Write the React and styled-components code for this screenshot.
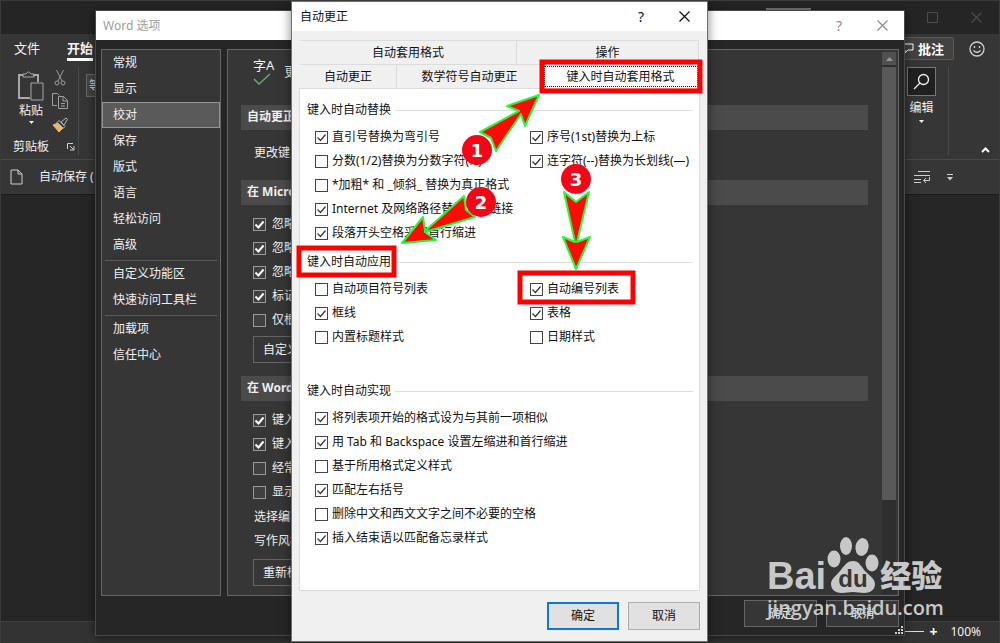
import React from "react";
import styled, { createGlobalStyle, css } from "styled-components";

const GlobalStyle = createGlobalStyle`
  * {
    box-sizing: border-box;
  }
  body {
    margin: 0;
    background: #262626;
    font-family: "Noto Sans", "Noto Sans CJK SC", sans-serif;
    font-size: 12px;
    line-height: 16px;
  }
  button,
  input,
  select {
    font: inherit;
    margin: 0;
    padding: 0;
  }
  button {
    cursor: pointer;
  }
  svg {
    display: block;
    fill: none;
    stroke: currentColor;
  }
`;

/* ---------- word window ---------- */

const WordWindow = styled.div`
  position: relative;
  display: flex;
  flex-direction: column;
  min-height: 100vh;
  overflow: hidden;
  color: #f0f0f0;
  border: 1px solid #3a3a3a;
  border-bottom: none;
`;

const WordTitle = styled.header`
  display: flex;
  justify-content: flex-end;
  height: 33px;
  padding-right: 17px;
  background: #252525;
`;

const SearchStub = styled.div`
  width: 45px;
  height: 24px;
  margin: 7px 116px 0 0;
  background: #777;
`;

const TitleButtons = styled.div`
  display: flex;
  align-items: center;
  gap: 33px;
`;

const IconButton = styled.button`
  display: flex;
  border: none;
  background: none;
  color: ${(props) => props.$color || "#d0d0d0"};
  font-size: 14px;
`;

const RibbonTabs = styled.nav`
  display: flex;
  align-items: flex-start;
  justify-content: space-between;
  height: 30px;
  padding: 3px 14px 0 13px;
  background: #363636;
`;

const TabGroup = styled.div`
  display: flex;
  align-items: center;
  gap: ${(props) => props.$gap}px;
`;

const RibbonTab = styled.button`
  height: 24px;
  border: none;
  border-bottom: 3px solid ${(props) => (props.$active ? "#fff" : "transparent")};
  background: none;
  color: #f4f4f4;
  font-size: 13px;
  font-weight: ${(props) => (props.$active ? 700 : 400)};
`;

const CommentButton = styled.button`
  display: flex;
  align-items: center;
  gap: 4px;
  height: 23px;
  padding: 0 9px;
  border: 1px solid #5c5855;
  border-radius: 2px;
  background: #444240;
  color: #fff;
  font-size: 13px;
  font-weight: 700;
`;

const Ribbon = styled.section`
  display: flex;
  justify-content: space-between;
  height: 95px;
  padding: 3px 9px 4px 12px;
  background: #363636;
`;

const RibbonLeft = styled.div`
  display: flex;
  gap: 7px;
`;

const RibbonGroup = styled.div`
  display: flex;
  flex-direction: column;
  justify-content: space-between;
  width: 66px;
  border-right: 1px solid #4a4a4a;
`;

const GroupTools = styled.div`
  display: flex;
  gap: 7px;
  padding-left: 4px;
`;

const GroupName = styled.div`
  display: flex;
  align-items: center;
  justify-content: space-between;
  padding-right: 3px;
  white-space: nowrap;
`;

const FontSelect = styled.select`
  width: 90px;
  height: 23px;
  margin-top: 7px;
  padding-left: 2px;
  border: 1px solid #666;
  border-radius: 0;
  background: #444;
  color: #ddd;
  appearance: none;
`;

const BigButton = styled.button`
  display: flex;
  flex-direction: column;
  align-items: center;
  justify-content: flex-start;
  gap: ${(props) => props.$gap || 2}px;
  padding-top: ${(props) => props.$top || 0}px;
  border: none;
  background: none;
  color: #f0f0f0;
`;

const SmallTools = styled.div`
  display: flex;
  flex-direction: column;
  align-items: center;
  gap: 7px;
  padding-top: 3px;
`;

const SearchBox = styled.span`
  display: flex;
  align-items: center;
  justify-content: center;
  width: 29px;
  height: 29px;
  border: 1px solid #777;
  background: #202020;
`;

const EditGroup = styled.div`
  display: flex;
  align-self: stretch;
  align-items: flex-start;
  width: 42px;
  margin-right: 32px;
  border-right: 1px solid #4a4a4a;
`;

const RibbonRight = styled.div`
  display: flex;
  align-items: flex-end;
`;

const QuickBar = styled.section`
  display: flex;
  align-items: center;
  justify-content: space-between;
  height: 36px;
  padding: 0 46px 0 9px;
  border-top: 1px solid #4a4a4a;
  border-bottom: 1px solid #1d1d1d;
  background: #363636;
`;

const Canvas = styled.main`
  flex: 1;
  background: #262626;
`;

const StatusBar = styled.footer`
  display: flex;
  align-items: center;
  justify-content: flex-end;
  gap: 3px;
  height: 22px;
  padding: 0 18px 2px 0;
  border-top: 1px solid #404040;
  background: #333;
`;

const ZoomTrack = styled.span`
  width: 26px;
  height: 1px;
  background: #ddd;
`;

const ZoomButton = styled.button`
  width: 12px;
  margin-right: 8px;
  border: none;
  background: none;
  color: #fff;
  font-size: 14px;
  font-weight: 700;
`;

/* ---------- options window ---------- */

const OptionsWindow = styled.section`
  position: absolute;
  top: 9px;
  right: 94px;
  bottom: 7px;
  left: 94px;
  display: flex;
  flex-direction: column;
  border: 1px solid #484848;
  background: #262626;
  box-shadow: 0 2px 10px rgba(0, 0, 0, 0.5);
`;

const OptionsTitle = styled.header`
  display: flex;
  align-items: center;
  justify-content: space-between;
  height: 29px;
  padding: 0 16px 0 7px;
  background: #fff;
  color: #9c9c9c;
  font-size: 12px;
`;

const OptionsBody = styled.div`
  display: flex;
  flex: 1;
  gap: 6px;
  min-height: 0;
  padding: 9px 5px 3px;
`;

const OptionsNav = styled.nav`
  width: 120px;
  border: 1px solid #666;
  background: #363636;
`;

const NavItem = styled.button`
  display: block;
  width: 100%;
  height: 26px;
  padding-left: 10px;
  border: 1px solid ${(props) => (props.$active ? "#949494" : "transparent")};
  background: ${(props) => (props.$active ? "#5a5a5a" : "none")};
  color: #f0f0f0;
  text-align: left;
`;

const NavLine = styled.div`
  height: 1px;
  margin: 2px 3px 0;
  background: #5a5a5a;
`;

const Panel = styled.div`
  display: flex;
  flex: 1;
  border: 1px solid #666;
  background: #363636;
`;

const PanelContent = styled.div`
  flex: 1;
  padding: 6px 0 0 13px;
  white-space: nowrap;
  overflow: hidden;
`;

const PanelHead = styled.div`
  display: flex;
  align-items: center;
  gap: 10px;
  height: 30px;
  margin: 0 0 19px 12px;
  font-size: 13px;
`;

const Band = styled.h3`
  height: 25px;
  margin: ${(props) => props.$top || 0}px 0 0;
  padding-left: 6px;
  background: #4b4b4b;
  font-size: 12px;
  font-weight: 700;
  line-height: 24px;
`;

const PanelText = styled.p`
  height: 24px;
  margin: ${(props) => props.$top || 0}px 0 0 13px;
  line-height: 24px;
`;

const PanelChecks = styled.div`
  padding: 7px 0 0 12px;
`;

const DarkButton = styled.button`
  height: 27px;
  margin-left: ${(props) => props.$left || 0}px;
  margin-top: ${(props) => props.$top || 0}px;
  padding: 0 9px;
  border: 1px solid #666;
  background: #363636;
  color: #f0f0f0;
`;

const ScrollBar = styled.div`
  display: flex;
  flex-direction: column;
  gap: 2px;
  width: 14px;
  margin: 2px 2px 1px 14px;
  background: #2e2e2e;
`;

const ScrollArrow = styled.button`
  display: flex;
  align-items: center;
  justify-content: center;
  height: 13px;
  border: none;
  background: #505050;
  color: #999;
`;

const ScrollThumb = styled.div`
  height: 433px;
  background: #595959;
`;

const OptionsFooter = styled.footer`
  position: relative;
  display: flex;
  align-items: flex-start;
  justify-content: flex-end;
  gap: 9px;
  height: 36px;
  padding: 1px 5px 0;

  button {
    width: 73px;
    margin: 0;
  }
`;

const Grip = styled.svg`
  position: absolute;
  right: 1px;
  bottom: 1px;
`;

/* ---------- auto correct dialog ---------- */

const Dialog = styled.section`
  position: absolute;
  top: 0;
  left: 50%;
  width: 417px;
  margin-left: -209px;
  display: flex;
  flex-direction: column;
  border: 1px solid #2b83cc;
  background: #f0f0f0;
  color: #111;
  box-shadow: 0 0 10px rgba(0, 0, 0, 0.5);
`;

const DialogTitle = styled.header`
  display: flex;
  align-items: center;
  justify-content: space-between;
  height: 29px;
  padding: 0 17px 0 8px;
  background: #fff;
`;

const TitleTools = styled.div`
  display: flex;
  align-items: center;
  gap: ${(props) => props.$gap}px;
`;

const TabRow = styled.div`
  display: grid;
  grid-template-columns: ${(props) => props.$columns};
  margin: ${(props) => props.$top || 0}px 8px 0;
  border-top: 1px solid #dcdcdc;
`;

const DialogTab = styled.button`
  height: 23px;
  padding: 0;
  border: none;
  border-right: 1px solid #dcdcdc;
  background: #f0f0f0;
  color: #111;

  ${(props) =>
    props.$active &&
    css`
      background: #fff;
      outline: 1px dotted #222;
      outline-offset: -2px;
    `}
`;

const Page = styled.div`
  height: 503px;
  margin: 0 7px;
  padding: 13px 6px 0 7px;
  border: 1px solid #dcdcdc;
  background: #fff;
`;

const Group = styled.fieldset`
  min-width: 0;
  margin: 0 0 ${(props) => props.$bottom || 0}px;
  padding: 0;
  border: none;
`;

const Legend = styled.legend`
  display: flex;
  align-items: center;
  gap: 4px;
  width: 100%;
  height: 16px;
  margin-bottom: 7px;
  padding: 0;

  &::after {
    content: "";
    flex: 1;
    height: 1px;
    background: #dcdcdc;
  }
`;

const Columns = styled.div`
  display: grid;
  grid-template-columns: 215px 1fr;
  align-items: start;
  padding-left: 8px;
`;

const CheckLabel = styled.label`
  display: flex;
  align-items: center;
  gap: ${(props) => (props.$dark ? 6 : 4)}px;
  height: 24px;
  white-space: nowrap;
`;

const tick = (color, width) =>
  `url("data:image/svg+xml,%3Csvg xmlns='http://www.w3.org/2000/svg' viewBox='0 0 11 11'%3E%3Cpath d='M1.5 5.5l3 3 5-6' fill='none' stroke='%23${color}' stroke-width='${width}'/%3E%3C/svg%3E")`;

const Box = styled.input`
  appearance: none;
  flex: none;
  width: 13px;
  height: 13px;
  border: 1px solid ${(props) => (props.$dark ? "#999" : "#444")};
  background: ${(props) => (props.$dark ? "#404040" : "#fff")};

  &:checked {
    background-image: ${(props) =>
      props.$dark ? tick("ffffff", 2) : tick("333333", 1.2)};
  }
`;

const DialogFooter = styled.footer`
  display: flex;
  justify-content: flex-end;
  gap: 9px;
  height: 50px;
  padding: 11px 7px 0;
`;

const DialogButton = styled.button`
  width: 72px;
  height: 28px;
  border: ${(props) => (props.$primary ? "2px solid #0b78d7" : "1px solid #adadad")};
  background: #e1e1e1;
  color: #111;
`;

const Marks = styled.svg`
  position: absolute;
  top: -1px;
  left: -1px;
  width: 417px;
  height: 640px;
  pointer-events: none;
`;

const MarkArrow = styled.polygon`
  fill: #ff0a05;
  stroke: #1dfb3c;
  stroke-width: 2;
  stroke-linejoin: round;
`;

const MarkBox = styled.rect`
  stroke: #fe0000;
  stroke-width: 5;
`;

const MarkText = styled.text`
  fill: #fff;
  stroke: none;
  font: 700 18px "DejaVu Sans", sans-serif;
  text-anchor: middle;
`;

/* ---------- watermark ---------- */

const Watermark = styled.div`
  position: absolute;
  right: 54px;
  bottom: 21px;
  width: 178px;
  color: #c8c8c8;
  pointer-events: none;
`;

const Brand = styled.div`
  display: flex;
  align-items: flex-end;
  height: 60px;
  font: 700 38px/36px "Liberation Sans", sans-serif;
`;

const BrandName = styled.span`
  font: 900 31px/40px "Noto Sans CJK SC", sans-serif;
`;

const BrandUrl = styled.div`
  font: 600 20px/28px "Open Sans", sans-serif;
`;

const CloseIcon = ({ size = 11 }) => (
  <svg width={size} height={size} viewBox="0 0 11 11">
    <path d="M.5.5l10 10M10.5.5l-10 10" strokeWidth="1.2" />
  </svg>
);

const Caret = () => (
  <svg width="5" height="3" viewBox="0 0 5 3">
    <path d="M0 0h5L2.5 3z" fill="currentColor" stroke="none" />
  </svg>
);

const Check = ({ label, checked, dark }) => (
  <CheckLabel $dark={dark}>
    <Box type="checkbox" defaultChecked={checked} $dark={dark} />
    {label}
  </CheckLabel>
);

const CheckList = ({ items, dark }) => (
  <div>
    {items.map(([label, checked]) => (
      <Check key={label} label={label} checked={checked} dark={dark} />
    ))}
  </div>
);

const navGroups = [
  ["常规", "显示", "校对", "保存", "版式", "语言", "轻松访问", "高级"],
  ["自定义功能区", "快速访问工具栏"],
  ["加载项", "信任中心"],
];

const officeChecks = [
  ["忽略全部大写的单词", true],
  ["忽略包含数字的单词", true],
  ["忽略 Internet 和文件地址", true],
  ["标记重复单词", true],
  ["仅根据主词典提供建议", false],
];

const wordChecks = [
  ["键入时检查拼写", true],
  ["键入时标记语法错误", true],
  ["经常混淆的单词", false],
  ["显示可读性统计信息", false],
];

const replaceLeft = [
  ["直引号替换为弯引号", true],
  ["分数(1/2)替换为分数字符(½)", false],
  ["*加粗* 和 _倾斜_ 替换为真正格式", false],
  ["Internet 及网络路径替换为超链接", true],
  ["段落开头空格采用首行缩进", true],
];

const replaceRight = [
  ["序号(1st)替换为上标", true],
  ["连字符(--)替换为长划线(—)", true],
];

const applyLeft = [
  ["自动项目符号列表", false],
  ["框线", true],
  ["内置标题样式", false],
];

const applyRight = [
  ["自动编号列表", true],
  ["表格", true],
  ["日期样式", false],
];

const autoChecks = [
  ["将列表项开始的格式设为与其前一项相似", true],
  ["用 Tab 和 Backspace 设置左缩进和首行缩进", true],
  ["基于所用格式定义样式", false],
  ["匹配左右括号", true],
  ["删除中文和西文文字之间不必要的空格", false],
  ["插入结束语以匹配备忘录样式", true],
];

const WordRibbon = () => (
  <>
    <WordTitle>
      <SearchStub />
      <TitleButtons>
        <IconButton $color="#4c4c4c" aria-label="最大化">
          <svg width="11" height="11" viewBox="0 0 11 11">
            <path d="M.5.5h10v10H.5z" />
          </svg>
        </IconButton>
        <IconButton $color="#4c4c4c" aria-label="关闭">
          <CloseIcon />
        </IconButton>
      </TitleButtons>
    </WordTitle>
    <RibbonTabs>
      <TabGroup $gap={27}>
        <RibbonTab>文件</RibbonTab>
        <RibbonTab $active>开始</RibbonTab>
      </TabGroup>
      <TabGroup $gap={15}>
        <CommentButton>
          <svg width="12" height="11" viewBox="0 0 12 11">
            <path d="M1 1h10v6H6L3 10V7H1z" />
          </svg>
          批注
        </CommentButton>
        <IconButton aria-label="反馈">
          <svg width="16" height="16" viewBox="0 0 16 16">
            <circle cx="8" cy="8" r="7" strokeWidth="1.3" />
            <path d="M5.5 5v2M10.5 5v2M4.5 9.5q3.5 3.5 7 0" strokeWidth="1.3" />
          </svg>
        </IconButton>
      </TabGroup>
    </RibbonTabs>
    <Ribbon>
      <RibbonLeft>
        <RibbonGroup>
          <GroupTools>
            <BigButton $top={4}>
              <svg width="28" height="30" viewBox="0 0 28 30">
                <g stroke="#a8a8a8">
                  <path d="M13 27H2V4h4M16 4h5v7" strokeWidth="2" />
                  <path d="M6 6V3h3q2.5-4 5 0h3v3z" />
                  <path d="M14 12h12v17H14z" />
                </g>
              </svg>
              粘贴
              <Caret />
            </BigButton>
            <SmallTools>
              <IconButton $color="#9a9a9a" aria-label="剪切">
                <svg width="12" height="16" viewBox="0 0 12 16">
                  <path d="M2.5 0L8 11M9.5 0L4 11" />
                  <circle cx="3" cy="13" r="2" />
                  <circle cx="9" cy="13" r="2" />
                </svg>
              </IconButton>
              <IconButton $color="#a0a0a0" aria-label="复制">
                <svg width="16" height="17" viewBox="0 0 16 17">
                  <path d="M5 12.5H.5V.5h5l2 2" />
                  <path d="M6.5 3.5h5l4 4v8h-9zM11 3.5V8h4.5M9 10.5h4M9 13h4" />
                </svg>
              </IconButton>
              <IconButton $color="#bbb" aria-label="格式刷">
                <svg width="16" height="16" viewBox="0 0 16 16">
                  <path d="M1 8l5-2 5 5-4 4z" fill="#eab765" stroke="#eab765" />
                  <path d="M5 5.500l2-2 6 6-2 2zM9 5l5-4 1.5 1.5L12 8z" />
                </svg>
              </IconButton>
            </SmallTools>
          </GroupTools>
          <GroupName>
            剪贴板
            <IconButton aria-label="剪贴板选项">
              <svg width="8" height="8" viewBox="0 0 8 8">
                <path d="M.5 6V.5H6M3 3l4 4M7 3v4H3" />
              </svg>
            </IconButton>
          </GroupName>
        </RibbonGroup>
        <FontSelect aria-label="字体">
          <option>等线</option>
        </FontSelect>
      </RibbonLeft>
      <RibbonRight>
        <EditGroup>
          <BigButton $gap={4}>
            <SearchBox>
              <svg width="17" height="17" viewBox="0 0 17 17">
                <circle cx="10.5" cy="6.5" r="5" strokeWidth="1.3" />
                <path d="M7 10l-6 6" strokeWidth="1.3" />
              </svg>
            </SearchBox>
            编辑
            <Caret />
          </BigButton>
        </EditGroup>
        <IconButton $color="#fff" aria-label="折叠功能区">
          <svg width="9" height="8" viewBox="0 0 9 8">
            <path d="M1 5l3.5-3.5L8 5" strokeWidth="2" />
          </svg>
        </IconButton>
      </RibbonRight>
    </Ribbon>
    <QuickBar>
      <TabGroup $gap={16}>
        <IconButton aria-label="新建">
          <svg width="13" height="16" viewBox="0 0 13 16">
            <path d="M1 1h7l4 4v10H1zM8 1v4h4" />
          </svg>
        </IconButton>
        <span>自动保存 (</span>
      </TabGroup>
      <TabGroup $gap={16}>
        <IconButton aria-label="换行标记">
          <svg width="17" height="14" viewBox="0 0 17 14">
            <path d="M4 1.5h12M0 5.5h16M0 9.5h7M0 12.5h7M15.5 7v3.5H10M12 8l-2.5 2.5L12 13" />
          </svg>
        </IconButton>
        <IconButton aria-label="自定义">
          <svg width="6" height="7" viewBox="0 0 6 7">
            <path d="M0 .5h6" />
            <path d="M0 3h6L3 6.5z" fill="currentColor" stroke="none" />
          </svg>
        </IconButton>
      </TabGroup>
    </QuickBar>
  </>
);

const Options = () => (
  <OptionsWindow>
    <OptionsTitle>
      Word 选项
      <TitleTools $gap={35}>
        <IconButton $color="#8c8c8c">?</IconButton>
        <IconButton $color="#8c8c8c" aria-label="关闭">
          <CloseIcon />
        </IconButton>
      </TitleTools>
    </OptionsTitle>
    <OptionsBody>
      <OptionsNav>
        {navGroups.map((group, i) => (
          <React.Fragment key={group[0]}>
            {i > 0 && <NavLine />}
            {group.map((name) => (
              <NavItem key={name} $active={name === "校对"}>
                {name}
              </NavItem>
            ))}
          </React.Fragment>
        ))}
      </OptionsNav>
      <Panel>
        <PanelContent>
          <PanelHead>
            <div>
              字A
              <svg width="18" height="12" viewBox="0 0 18 12">
                <path d="M1 6l5 5L17 1" stroke="#5fae6b" strokeWidth="1.5" />
              </svg>
            </div>
            <span>更改 Word 更正文字的方式</span>
          </PanelHead>
          <Band>自动更正选项</Band>
          <PanelText $top={11}>更改键入时 Word 更正文字的方式:</PanelText>
          <Band $top={15}>在 Microsoft Office 程序中更正拼写时</Band>
          <PanelChecks>
            <CheckList items={officeChecks} dark />
            <DarkButton $top={4}>自定义词典...</DarkButton>
          </PanelChecks>
          <Band $top={13}>在 Word 中更正拼写和语法时</Band>
          <PanelChecks>
            <CheckList items={wordChecks} dark />
          </PanelChecks>
          <PanelText $top={1}>选择编写语言</PanelText>
          <PanelText>写作风格(W):</PanelText>
          <DarkButton $left={12} $top={6}>
            重新检查文档
          </DarkButton>
        </PanelContent>
        <ScrollBar>
          <ScrollArrow aria-label="向上滚动">
            <svg width="7" height="4" viewBox="0 0 7 4">
              <path d="M0 4h7L3.5 0z" fill="currentColor" stroke="none" />
            </svg>
          </ScrollArrow>
          <ScrollThumb />
        </ScrollBar>
      </Panel>
    </OptionsBody>
    <OptionsFooter>
      <DarkButton>确定</DarkButton>
      <DarkButton>取消</DarkButton>
      <Grip width="8" height="8" viewBox="0 0 8 8">
        <path
          d="M6 0h2v2H6zM6 3h2v2H6zM3 3h2v2H3zM6 6h2v2H6zM3 6h2v2H3zM0 6h2v2H0z"
          fill="#ccc"
          stroke="none"
        />
      </Grip>
    </OptionsFooter>
  </OptionsWindow>
);

const AutoCorrect = () => (
  <Dialog>
    <DialogTitle>
      自动更正
      <TitleTools $gap={35}>
        <IconButton $color="#111">?</IconButton>
        <IconButton $color="#111" aria-label="关闭">
          <CloseIcon />
        </IconButton>
      </TitleTools>
    </DialogTitle>
    <TabRow $columns="217fr 182fr" $top={9}>
      <DialogTab>自动套用格式</DialogTab>
      <DialogTab>操作</DialogTab>
    </TabRow>
    <TabRow $columns="97fr 146fr 156fr">
      <DialogTab>自动更正</DialogTab>
      <DialogTab>数学符号自动更正</DialogTab>
      <DialogTab $active>键入时自动套用格式</DialogTab>
    </TabRow>
    <Page>
      <Group $bottom={9}>
        <Legend>键入时自动替换</Legend>
        <Columns>
          <CheckList items={replaceLeft} />
          <CheckList items={replaceRight} />
        </Columns>
      </Group>
      <Group $bottom={34}>
        <Legend>键入时自动应用</Legend>
        <Columns>
          <CheckList items={applyLeft} />
          <CheckList items={applyRight} />
        </Columns>
      </Group>
      <Group>
        <Legend>键入时自动实现</Legend>
        <Columns>
          <CheckList items={autoChecks} />
        </Columns>
      </Group>
    </Page>
    <DialogFooter>
      <DialogButton $primary>确定</DialogButton>
      <DialogButton>取消</DialogButton>
    </DialogFooter>
    <Marks viewBox="291 1 417 640">
      <MarkBox x="542" y="62" width="158" height="29" />
      <MarkBox x="299" y="248" width="95" height="27" />
      <MarkBox x="520" y="273" width="113" height="29" />
      <MarkArrow points="539,95 507,106 519,111 480,132 491,138 496,151 521,114 525,126" />
      <MarkArrow points="402,243 423,217 425,231 464,196 466,210 475,217 425,232 436,240" />
      <MarkArrow points="576,269 563,237 575,242 564,192 576,202 589,192 577,242 590,237" />
      {[
        [477, 150],
        [481, 202],
        [576, 179],
      ].map(([x, y], i) => (
        <g key={x}>
          <circle cx={x} cy={y} r="15" fill="#f40617" stroke="none" />
          <MarkText x={x} y={y + 7}>
            {i + 1}
          </MarkText>
        </g>
      ))}
    </Marks>
  </Dialog>
);

const BaiduMark = () => (
  <Watermark>
    <Brand>
      Bai
      <svg width="54" height="58" viewBox="0 0 54 58">
        <g fill="#c8c8c8" stroke="none">
          <ellipse cx="8" cy="23" rx="6.5" ry="8.5" />
          <ellipse cx="20" cy="10" rx="6" ry="9" />
          <ellipse cx="36" cy="11" rx="6.5" ry="9" transform="rotate(10 36 11)" />
          <ellipse cx="46" cy="27" rx="6.5" ry="8.5" />
          <path d="M27 25c6 0 8 5 12 10 5 5 10 8 10 13 0 6-5 9-11 9-4 0-7-1-11-1s-7 1-11 1C10 57 5 54 5 48c0-5 5-8 9-13s7-10 13-10z" />
          <text x="27" y="51" textAnchor="middle" fontSize="24" fontWeight="700" fill="#363636">
            du
          </text>
        </g>
      </svg>
      <BrandName>经验</BrandName>
    </Brand>
    <BrandUrl>jingyan.baidu.com</BrandUrl>
  </Watermark>
);

const App = () => {
  return (
    <WordWindow>
      <GlobalStyle />
      <WordRibbon />
      <Canvas />
      <StatusBar>
        <ZoomTrack />
        <ZoomButton aria-label="放大">+</ZoomButton>
        100%
      </StatusBar>
      <Options />
      <AutoCorrect />
      <BaiduMark />
    </WordWindow>
  );
};

export default App;
